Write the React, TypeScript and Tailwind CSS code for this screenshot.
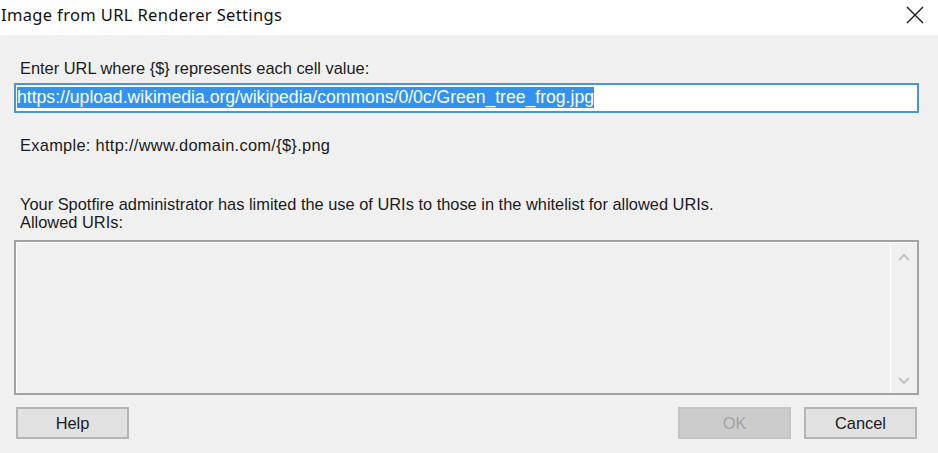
import type { ReactNode } from "react";

const sans = "font-['Liberation_Sans',Arial,sans-serif]";

function WinButton({ children, disabled }: { children: ReactNode; disabled?: boolean }) {
  return (
    <button
      type="button"
      disabled={disabled}
      className={`h-[32px] w-[113px] border-2 text-[16.4px] leading-none ${sans} ${
        disabled
          ? "border-[#c4c4c4] bg-[#cccccc] text-[#a3a3a3]"
          : "border-[#b4b4b4] bg-[#e1e1e1] text-[#1b1b1b]"
      }`}
    >
      {children}
    </button>
  );
}

function Chevron({ up }: { up?: boolean }) {
  return (
    <svg width="12" height="8" viewBox="0 0 12 8" className="text-[#c3c3c3]">
      <path
        d={up ? "M1 7 L6 2 L11 7" : "M1 1 L6 6 L11 1"}
        fill="none"
        stroke="currentColor"
        strokeWidth="2"
      />
    </svg>
  );
}

export default function App() {
  return (
    <div className="flex h-[453px] w-[938px] flex-col overflow-hidden bg-[#f0f0f0] text-[#1b1b1b]">
      {/* title bar */}
      <div className="flex h-[35px] shrink-0 items-center justify-between bg-white">
        <span className="pl-[1px] pb-[4px] font-['Noto_Sans',sans-serif] text-[16.5px] tracking-[0.35px] text-[#111]">
          Image from URL Renderer Settings
        </span>
        <svg width="18" height="18" viewBox="0 0 18 18" className="mr-[14px] mb-[5px]">
          <path d="M1 1 L17 17 M17 1 L1 17" stroke="#1a1a1a" strokeWidth="1.4" />
        </svg>
      </div>

      <div className={`flex flex-1 flex-col pl-[14px] pr-[19px] pt-[24px] text-[16.4px] leading-[18px] ${sans}`}>
        <div className="pl-[6px]">Enter URL where {"{$}"} represents each cell value:</div>

        <div className="mt-[6px] h-[30px] border-2 border-[#4a94da] bg-white px-[1px] pt-[2px]">
          <span className="inline-block bg-[#3391f0] text-[17.6px] leading-[21px] text-white">
            https://upload.wikimedia.org/wikipedia/commons/0/0c/Green_tree_frog.jpg
          </span>
        </div>

        <div className="mt-[23px] pl-[6px] tracking-[0.3px]">Example: http://www.domain.com/{"{$}"}.png</div>

        <div className="mt-[41px] pl-[6px]">
          <div>Your Spotfire administrator has limited the use of URIs to those in the whitelist for allowed URIs.</div>
          <div>Allowed URIs:</div>
        </div>

        <div className="mt-[9px] flex h-[155px] border-2 border-[#a2a2a2] shadow-[inset_1px_1px_0_#ffffff]">
          <div className="flex-1" />
          <div className="flex w-[27px] flex-col items-center justify-between border-l border-[#fbfbfb] pt-[11px] pb-[8px]">
            <Chevron up />
            <Chevron />
          </div>
        </div>

        <div className="mt-[12px] flex items-center px-[2px]">
          <WinButton>Help</WinButton>
          <div className="flex-1" />
          <WinButton disabled>OK</WinButton>
          <div className="w-[13px]" />
          <WinButton>Cancel</WinButton>
        </div>
      </div>
    </div>
  );
}
